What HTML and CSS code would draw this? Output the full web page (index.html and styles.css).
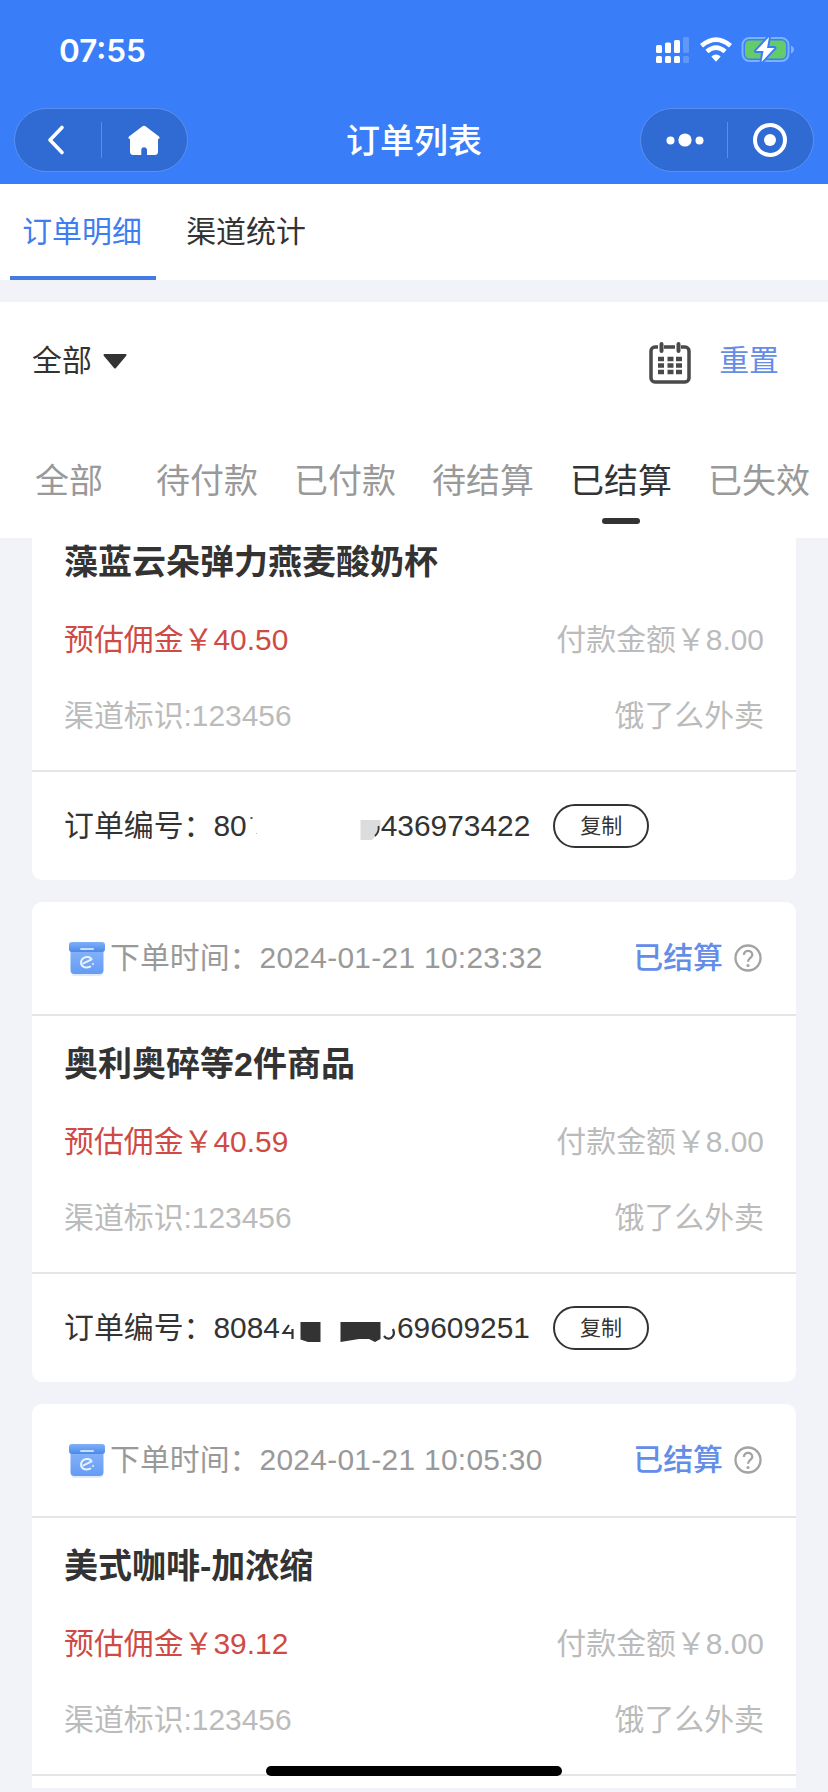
FILE: index.html
```html
<!DOCTYPE html>
<html lang="zh-CN">
<head>
    <meta charset="UTF-8">
    <title>订单列表</title>
    <link rel="stylesheet" href="styles.css">
</head>
<body>
    <!-- shared icons -->
    <svg class="defs" width="0" height="0">
        <defs>
            <linearGradient id="boxFill" x1="0" y1="0" x2="0" y2="1">
                <stop offset="0" stop-color="#8bb7fa"/>
                <stop offset="1" stop-color="#659bf5"/>
            </linearGradient>
            <linearGradient id="lidFill" x1="0" y1="0" x2="0" y2="1">
                <stop offset="0" stop-color="#80b1f8"/>
                <stop offset="1" stop-color="#4b89ec"/>
            </linearGradient>
            <symbol id="icon-box" viewBox="0 0 46 40">
                <rect x="7" y="9" width="32" height="29" rx="4" fill="#dfeafd"/>
                <rect x="6.500" y="7" width="33" height="29" rx="4" fill="url(#boxFill)"/>
                <rect x="5" y="4" width="36" height="10" rx="3" fill="url(#lidFill)"/>
                <path d="M17 11H29" stroke="#c8ddff" stroke-width="2" stroke-linecap="round"/>
                <path d="M19.500 25.300L27.600 21.300C25.800 17.300 18.300 18.600 17.200 23.300C16.200 28 20.500 31 26.300 28.600" fill="none" stroke="#e8f2ff" stroke-width="2" stroke-linecap="round" stroke-linejoin="round"/>
                <circle cx="29" cy="26" r="1" fill="#e8f2ff"/>
            </symbol>
            <symbol id="icon-help" viewBox="0 0 28 28">
                <circle cx="14" cy="14" r="12.500" fill="none" stroke="#a3a3a3" stroke-width="2.300"/>
                <path d="M9.900 11C9.900 5.600 18.300 5.700 18.300 10.700C18.300 13.800 14 13.900 14 17.800" fill="none" stroke="#a3a3a3" stroke-width="2.300"/>
                <circle cx="14" cy="21.500" r="1.600" fill="#a3a3a3"/>
            </symbol>
        </defs>
    </svg>

    <div class="page">
        <header class="header">
            <div class="status-bar">
                <span class="time">07:55</span>
                <div class="status-icons">
                    <svg width="34" height="28" viewBox="0 0 34 28" fill="#fff">
                        <rect x="1" y="9" width="6" height="8" rx="1.500"/>
                        <rect x="10" y="6.500" width="6" height="10.500" rx="1.500"/>
                        <rect x="19" y="4" width="6" height="13" rx="1.500"/>
                        <rect x="28" y="1" width="6" height="16" rx="1.500" opacity=".2"/>
                        <rect x="1" y="20" width="6" height="7" rx="1.500"/>
                        <rect x="10" y="20" width="6" height="7" rx="1.500"/>
                        <rect x="19" y="20" width="6" height="7" rx="1.500"/>
                        <rect x="28" y="20" width="6" height="7" rx="1.500" opacity=".2"/>
                    </svg>
                    <svg class="wifi" width="32" height="26" viewBox="0 0 32 26" fill="none" stroke="#fff">
                        <path d="M1.500 8.800Q16 -3.600 30.500 8.800" stroke-width="4.700"/>
                        <path d="M6.900 14.600Q16 6.800 25.100 14.600" stroke-width="4.600"/>
                        <path d="M11.300 19.500Q16 15.300 20.700 19.500L16 24.800Z" fill="#fff" stroke="none"/>
                    </svg>
                    <svg class="battery" width="54" height="28" viewBox="0 0 54 28">
                        <rect x="1.500" y="2" width="46" height="23" rx="7" fill="none" stroke="#7fb0fb" stroke-width="2"/>
                        <rect x="4" y="4.500" width="41" height="18" rx="4.500" fill="#64cc66"/>
                        <path d="M50 9.500C54 11 54 16 50 17.500Z" fill="#7fb0fb"/>
                        <path d="M28 1L15 15H22.500L20.500 26L33.500 12H26Z" fill="#fff" stroke="#397ef8" stroke-width="4" stroke-linejoin="round" paint-order="stroke"/>
                    </svg>
                </div>
            </div>
            <div class="nav-bar">
                <div class="capsule">
                    <span class="capsule-btn">
                        <svg class="back" width="20" height="32" viewBox="0 0 20 32"><path d="M16 3.500L4 16L16 28.500" fill="none" stroke="#fff" stroke-width="3.600" stroke-linecap="round" stroke-linejoin="round"/></svg>
                    </span>
                    <span class="capsule-line"></span>
                    <span class="capsule-btn">
                        <svg width="34" height="32" viewBox="0 0 34 32"><path d="M15.500 2.200Q17 1.200 18.500 2.200L32 12.400Q33.500 14.800 31 15V27.500Q31 31 27.500 31H20V25.500Q19.500 23.300 17 23.300Q14.500 23.300 14.300 25.500V31H6.500Q3 31 3 27.500V15Q0.500 14.800 2 12.400Z" fill="#fff"/></svg>
                    </span>
                </div>
                <h1 class="nav-title">订单列表</h1>
                <div class="capsule">
                    <span class="capsule-btn">
                        <svg class="dots" width="40" height="16" viewBox="0 0 40 16" fill="#fff"><circle cx="5.500" cy="8.500" r="4"/><circle cx="20" cy="8" r="6.600"/><circle cx="34.500" cy="8.500" r="4"/></svg>
                    </span>
                    <span class="capsule-line"></span>
                    <span class="capsule-btn">
                        <svg width="36" height="36" viewBox="0 0 36 36"><circle cx="18" cy="18" r="15" fill="none" stroke="#fff" stroke-width="4"/><circle cx="18" cy="18" r="6" fill="#fff"/></svg>
                    </span>
                </div>
            </div>
        </header>

        <nav class="tabs">
            <span class="tab active">订单明细</span>
            <span class="tab">渠道统计</span>
        </nav>

        <section class="filter">
            <div class="filter-row">
                <span>全部</span>
                <svg class="arrow" width="28" height="20" viewBox="0 0 28 20"><path d="M3.500 4H24.500L14 16.500Z" fill="#333" stroke="#333" stroke-width="2" stroke-linejoin="round"/></svg>
                <svg class="calendar" width="42" height="44" viewBox="0 0 42 44">
                    <rect x="2" y="6" width="38" height="35" rx="4" fill="none" stroke="#4a4a4a" stroke-width="3.500"/>
                    <path d="M9 6H15M26 6H32" stroke="#fff" stroke-width="5"/>
                    <path d="M12.500 3V10M29.500 3V10" stroke="#4a4a4a" stroke-width="4" stroke-linecap="round"/>
                    <path d="M9 18H15M18.500 18H24.500M27 18H33M9 24.500H15M18.500 24.500H24.500M27 24.500H33M9 31H15M18.500 31H24.500M27 31H33" stroke="#4a4a4a" stroke-width="4.500"/>
                </svg>
                <span class="reset">重置</span>
            </div>
            <div class="state-tabs">
                <span class="state">全部</span>
                <span class="state">待付款</span>
                <span class="state">已付款</span>
                <span class="state">待结算</span>
                <span class="state active">已结算</span>
                <span class="state">已失效</span>
            </div>
        </section>

        <main class="list">
            <article class="card scrolled">
                <div class="card-body">
                    <h2>藻蓝云朵弹力燕麦酸奶杯</h2>
                    <div class="row"><span class="commission">预估佣金￥40.50</span><span>付款金额￥8.00</span></div>
                    <div class="row"><span>渠道标识:123456</span><span>饿了么外卖</span></div>
                </div>
                <div class="card-foot">
                    <span>订单编号：80</span>
                    <svg class="mask" width="133" height="28" viewBox="0 0 133 28">
                        <rect x="2.500" y="5" width="2" height="2" fill="#555"/>
                        <rect x="8" y="21" width="1" height="1" fill="#bbb"/>
                        <path d="M112.500 8H132.500V14L129 23L124 28H112.500Z" fill="#dcdcdc"/>
                        <path d="M130.500 14Q131.500 20 127 24" fill="none" stroke="#333" stroke-width="1.800"/>
                    </svg>
                    <span>436973422</span>
                    <button class="copy">复制</button>
                </div>
            </article>

            <article class="card">
                <div class="card-head">
                    <svg width="46" height="40"><use href="#icon-box"/></svg>
                    <span>下单时间：<span class="date">2024-01-21 10:23:32</span></span>
                    <span class="settled">已结算</span>
                    <svg class="help" width="28" height="28"><use href="#icon-help"/></svg>
                </div>
                <div class="card-body">
                    <h2>奥利奥碎等2件商品</h2>
                    <div class="row"><span class="commission">预估佣金￥40.59</span><span>付款金额￥8.00</span></div>
                    <div class="row"><span>渠道标识:123456</span><span>饿了么外卖</span></div>
                </div>
                <div class="card-foot">
                    <span>订单编号：8084</span>
                    <svg class="mask" width="116" height="28" viewBox="0 0 116 28" fill="#333">
                        <path d="M8 11L2.500 19H12M11.500 15V25" fill="none" stroke="#333" stroke-width="2.200"/>
                        <path d="M19.500 8H39.500V28H27L19.500 25.500Z"/>
                        <path d="M59.500 8H99.500V25L94 28L88 25H78L59.500 28Z"/>
                        <path d="M103 22Q106 26 110 24Q114.500 21 112 15" fill="none" stroke="#333" stroke-width="2.200"/>
                    </svg>
                    <span>69609251</span>
                    <button class="copy">复制</button>
                </div>
            </article>

            <article class="card">
                <div class="card-head">
                    <svg width="46" height="40"><use href="#icon-box"/></svg>
                    <span>下单时间：<span class="date">2024-01-21 10:05:30</span></span>
                    <span class="settled">已结算</span>
                    <svg class="help" width="28" height="28"><use href="#icon-help"/></svg>
                </div>
                <div class="card-body">
                    <h2>美式咖啡-加浓缩</h2>
                    <div class="row"><span class="commission">预估佣金￥39.12</span><span>付款金额￥8.00</span></div>
                    <div class="row"><span>渠道标识:123456</span><span>饿了么外卖</span></div>
                </div>
                <div class="card-foot"></div>
            </article>
        </main>
        <div class="home-indicator"></div>
    </div>
</body>
</html>
```
FILE: styles.css
```css
* { box-sizing: border-box; }
body { margin: 0; background: #f2f3f8; color: #333; font-family: "Liberation Sans", "Noto Sans CJK SC", sans-serif; font-size: 29.9px; }
svg { display: block; flex-shrink: 0; }
.defs { position: absolute; }
.page { position: relative; display: flex; flex-direction: column; width: 828px; height: 1792px; padding-bottom: 4px; overflow: hidden; }

/* header */
.header { height: 184px; flex-shrink: 0; background: #397ef8; color: #fff; }
.status-bar { display: flex; justify-content: space-between; align-items: center; height: 100px; padding: 0 33px 0 59px; }
.time { font-family: Inter, sans-serif; font-size: 31.5px; font-weight: 600; }
.status-icons { display: flex; align-items: center; }
.wifi { margin-left: 11px; }
.battery { margin-left: 9px; }
.nav-bar { display: flex; justify-content: space-between; padding: 8px 14px 0; }
.capsule { display: flex; align-items: center; width: 174px; height: 64px; border: 1px solid #5a90ef; border-radius: 32px; background: #2f6bd2; }
.capsule-btn { flex: 1; display: flex; justify-content: center; }
.capsule-line { width: 1px; height: 36px; background: #5a8ee8; }
.back { margin-right: 3px; }
.dots { margin-left: 2px; }
.nav-title { margin: 0; font-size: 34px; font-weight: 500; line-height: 66px; }

/* page tabs */
.tabs { display: flex; height: 96px; flex-shrink: 0; padding-left: 10px; background: #fff; }
.tab { width: 146px; margin-right: 17px; padding-right: 2px; border-bottom: 4px solid transparent; text-align: center; line-height: 96px; }
.tab + .tab { padding: 0; }
.tab.active { color: #3f7df0; border-color: #437be3; }

/* filter */
.filter { height: 236px; flex-shrink: 0; margin-top: 22px; background: #fff; }
.filter-row { display: flex; align-items: center; height: 118px; padding: 0 49px 0 32px; line-height: 48px; }
.arrow { margin-left: 9px; }
.calendar { margin: 4px 0 0 auto; }
.reset { margin-left: 28px; color: #648de8; }
.state-tabs { display: flex; height: 118px; }
.state { display: flex; flex-direction: column; align-items: center; width: 138px; font-size: 34px; line-height: 122px; color: #999; }
.state.active { color: #333; }
.state.active::after { content: ""; width: 38px; height: 6px; margin-top: -24px; border-radius: 3px; background: #333; }

/* order cards */
.list { flex: 1; min-height: 0; padding: 0 32px; overflow: hidden; }
.card { margin-bottom: 22px; border-radius: 10px; background: #fff; }
.scrolled { margin-top: -24px; }
.card-head { display: flex; align-items: center; height: 114px; padding: 0 34px 0 32px; border-bottom: 2px solid #e5e5e5; line-height: 48px; color: #999; }
.date { letter-spacing: 0.3px; }
.settled { margin-left: auto; color: #648de8; font-weight: 500; }
.help { margin-left: 11px; }
.card-body { height: 258px; padding: 24px 32px 0; border-bottom: 2px solid #e5e5e5; }
.card-body h2 { margin: 0 0 16px; font-size: 34px; font-weight: bold; line-height: 48px; }
.row { display: flex; justify-content: space-between; line-height: 76px; color: #bbb; }
.commission { color: #cf4a45; }
.card-foot { display: flex; align-items: center; height: 108px; padding: 0 32px; line-height: 48px; }
.mask { margin-left: 1px; }
.copy { width: 96px; height: 44px; margin-left: 23px; padding: 0; border: 2px solid #333; border-radius: 22px; background: #fff; color: #333; font-family: inherit; font-size: 21px; line-height: 38px; }

.home-indicator { position: absolute; left: 266px; bottom: 16px; width: 296px; height: 10px; border-radius: 5px; background: #000; }
```
